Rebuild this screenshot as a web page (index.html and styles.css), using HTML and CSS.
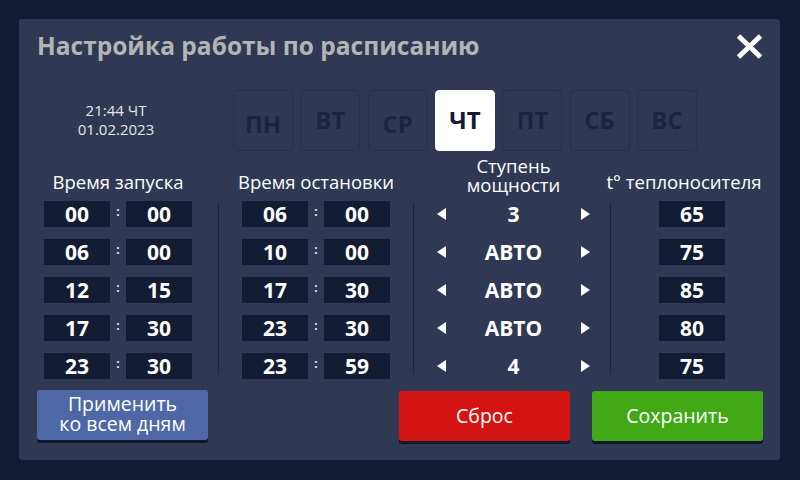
FILE: index.html
```html
<!DOCTYPE html>
<html lang="ru">
<head>
<meta charset="utf-8">
<title>Настройка работы по расписанию</title>
<link rel="stylesheet" href="styles.css">
</head>
<body>
<div class="panel">
  <div class="titlebar">
    <div class="title">Настройка работы по расписанию</div>
    <div class="close">
      <svg width="27" height="25" viewBox="0 0 27 25"><path d="M2.5 2 L24.5 23 M24.5 2 L2.5 23" stroke="#fff" stroke-width="5" fill="none"/></svg>
    </div>
  </div>
  <div class="daysrow">
    <div class="date">21:44 ЧТ<br>01.02.2023</div>
    <div class="days">
      <div class="day low">ПН</div>
      <div class="day">ВТ</div>
      <div class="day low">СР</div>
      <div class="day active">ЧТ</div>
      <div class="day">ПТ</div>
      <div class="day">СБ</div>
      <div class="day">ВС</div>
    </div>
  </div>
  <div class="table">
    <div class="col col-time">
      <div class="head">Время запуска</div>
      <div class="rows">
        <div class="trow"><div class="box">00</div><div class="colon">:</div><div class="box">00</div></div>
        <div class="trow"><div class="box">06</div><div class="colon">:</div><div class="box">00</div></div>
        <div class="trow"><div class="box">12</div><div class="colon">:</div><div class="box">15</div></div>
        <div class="trow"><div class="box">17</div><div class="colon">:</div><div class="box">30</div></div>
        <div class="trow"><div class="box">23</div><div class="colon">:</div><div class="box">30</div></div>
      </div>
    </div>
    <div class="divider d1"></div>
    <div class="col col-time col2">
      <div class="head">Время остановки</div>
      <div class="rows">
        <div class="trow"><div class="box">06</div><div class="colon">:</div><div class="box">00</div></div>
        <div class="trow"><div class="box">10</div><div class="colon">:</div><div class="box">00</div></div>
        <div class="trow"><div class="box">17</div><div class="colon">:</div><div class="box">30</div></div>
        <div class="trow"><div class="box">23</div><div class="colon">:</div><div class="box">30</div></div>
        <div class="trow"><div class="box">23</div><div class="colon">:</div><div class="box">59</div></div>
      </div>
    </div>
    <div class="divider d2"></div>
    <div class="col col-power">
      <div class="head two">Ступень<br>мощности</div>
      <div class="rows">
        <div class="prow"><span class="arr left"></span><span class="val">3</span><span class="arr right"></span></div>
        <div class="prow"><span class="arr left"></span><span class="val">АВТО</span><span class="arr right"></span></div>
        <div class="prow"><span class="arr left"></span><span class="val">АВТО</span><span class="arr right"></span></div>
        <div class="prow"><span class="arr left"></span><span class="val">АВТО</span><span class="arr right"></span></div>
        <div class="prow"><span class="arr left"></span><span class="val">4</span><span class="arr right"></span></div>
      </div>
    </div>
    <div class="divider d3"></div>
    <div class="col col-temp">
      <div class="head">t° теплоносителя</div>
      <div class="rows">
        <div class="trow"><div class="box">65</div></div>
        <div class="trow"><div class="box">75</div></div>
        <div class="trow"><div class="box">85</div></div>
        <div class="trow"><div class="box">80</div></div>
        <div class="trow"><div class="box">75</div></div>
      </div>
    </div>
  </div>
  <div class="buttons">
    <div class="btn apply">Применить<br>ко всем дням</div>
    <div class="btn reset">Сброс</div>
    <div class="btn save">Сохранить</div>
  </div>
</div>
</body>
</html>
```
FILE: styles.css
```css
html, body {
  margin: 0;
  padding: 0;
}
body {
  background: #121c35;
  width: 800px;
  height: 480px;
  overflow: hidden;
  font-family: "Open Sans", "DejaVu Sans", sans-serif;
  color: #fff;
}
.panel {
  margin: 19px 0 0 19px;
  width: 761px;
  height: 441px;
  background: #2f3954;
  border-radius: 3px;
  box-sizing: border-box;
  display: flex;
  flex-direction: column;
}
.titlebar {
  display: flex;
  align-items: center;
  justify-content: space-between;
  padding: 10px 17px 0 18px;
  height: 33px;
}
.title {
  font-size: 24.5px;
  font-weight: 700;
  color: #b4b4b4;
  line-height: 33px;
  white-space: nowrap;
}
.close {
  display: flex;
  margin-top: 2px;
}
.daysrow {
  display: flex;
  align-items: center;
  margin-top: 28px;
  height: 61px;
}
.date {
  width: 158px;
  margin-left: 18px;
  text-align: center;
  font-size: 15px;
  line-height: 19px;
  color: #e6e6e6;
  margin-top: -2px;
}
.days {
  display: flex;
  gap: 7.33px;
  margin-left: 38px;
}
.day {
  width: 60px;
  height: 61px;
  box-sizing: border-box;
  border: 1px solid #273049;
  border-radius: 4px;
  display: flex;
  align-items: center;
  justify-content: center;
  font-size: 24px;
  font-weight: 700;
  color: #1c2540;
  padding-bottom: 2px;
}
.day.low {
  padding-top: 5px;
  padding-bottom: 0;
}
.day.active {
  background: #fff;
  border-color: #fff;
  color: #121b33;
}
.table {
  display: flex;
  padding-left: 25px;
  margin-top: 10px;
}
.col {
  display: flex;
  flex-direction: column;
}
.head {
  height: 40px;
  box-sizing: border-box;
  display: flex;
  align-items: flex-end;
  justify-content: center;
  text-align: center;
  white-space: nowrap;
  font-size: 18.5px;
  line-height: 18.5px;
  color: #fff;
  padding-bottom: 10px;
}
.head.two {
  padding-bottom: 7px;
}
.rows {
  display: flex;
  flex-direction: column;
  gap: 12px;
}
.col-time {
  width: 148px;
}
.trow {
  display: flex;
  height: 26px;
}
.box {
  width: 66px;
  height: 26px;
  background: #121c33;
  display: flex;
  align-items: center;
  justify-content: center;
  font-size: 21px;
  font-weight: 700;
  color: #fff;
}
.colon {
  width: 16px;
  text-align: center;
  font-size: 12px;
  font-weight: 700;
  line-height: 22px;
  color: #e8e8e8;
}
.divider {
  width: 1px;
  height: 171px;
  background: #1b2440;
  align-self: flex-end;
  margin-bottom: 5px;
}
.d1 { margin-left: 26px; }
.d2 { margin-left: 23px; }
.d3 { margin-left: 20px; }
.col2 { margin-left: 23px; }
.col-power {
  width: 153px;
  margin-left: 23px;
}
.prow {
  display: flex;
  align-items: center;
  justify-content: space-between;
  height: 26px;
}
.val {
  font-size: 21px;
  font-weight: 700;
  color: #fff;
  line-height: 26px;
}
.arr {
  width: 0;
  height: 0;
  border-top: 6.5px solid transparent;
  border-bottom: 6.5px solid transparent;
}
.arr.left {
  border-right: 9px solid #fff;
}
.arr.right {
  border-left: 9px solid #fff;
}
.col-temp {
  width: 162px;
}
.col-temp .head {
  padding-right: 16px;
}
.col-temp .trow {
  justify-content: center;
}
.buttons {
  display: flex;
  padding: 0 17px 0 18px;
  margin-top: 11px;
}
.btn {
  width: 171px;
  height: 50px;
  border-radius: 3px;
  display: flex;
  align-items: center;
  justify-content: center;
  text-align: center;
  font-size: 19.5px;
  line-height: 20.5px;
  color: #fff;
  box-shadow: 0 3px 0 #10182c;
}
.apply {
  background: #4e68a6;
  padding-bottom: 2px;
  box-sizing: border-box;
}
.reset {
  background: #d41313;
  margin-left: auto;
  margin-top: 1px;
}
.save {
  background: #42a916;
  margin-left: 22px;
  margin-top: 1px;
}
```
